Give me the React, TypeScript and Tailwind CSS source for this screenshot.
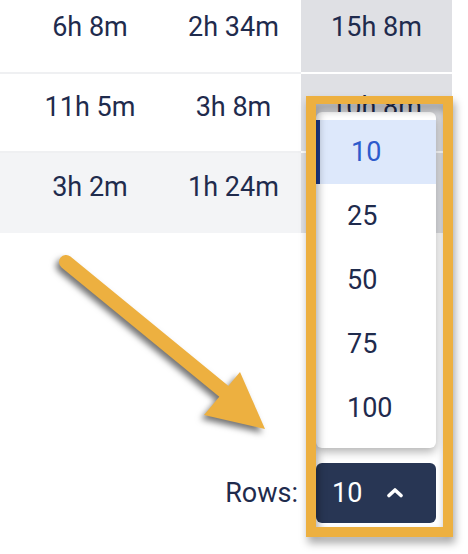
import React from "react";

const rows = [
  { a: "6h 8m", b: "2h 34m", c: "15h 8m", h: "h-[74px]", pt: "pt-[13px]", bg: "bg-white" },
  { a: "11h 5m", b: "3h 8m", c: "10h 8m", h: "h-[79px]", pt: "pt-[19px]", bg: "bg-white" },
  { a: "3h 2m", b: "1h 24m", c: "9h 40m", h: "h-[80px]", pt: "pt-[20px]", bg: "bg-[#f3f4f6]" },
];

const options = [10, 25, 50, 75, 100];

export default function App() {
  return (
    <div
      className="relative w-[468px] h-[554px] overflow-hidden bg-white text-[#1f2b4d]"
      style={{ fontFamily: "Roboto, 'Noto Sans', sans-serif" }}
    >
      {/* table */}
      <div className="w-[452px] text-[27px] leading-[28px]">
        {rows.map((r, i) => (
          <div key={i} className="grid grid-cols-[180px_121px_151px]">
            <div
              className={`${r.h} ${r.pt} ${r.bg} text-center ${i < 2 ? "border-b-2 border-[#eff0f2]" : ""}`}
            >
              {r.a}
            </div>
            <div
              className={`${r.h} ${r.pt} ${r.bg} pr-[14px] text-center ${i < 2 ? "border-b-2 border-[#eff0f2]" : ""}`}
            >
              {r.b}
            </div>
            <div
              className={`${r.h} ${r.pt} bg-[#dfe0e4] text-center ${i < 2 ? "border-b-2 border-white" : ""}`}
            >
              {r.c}
            </div>
          </div>
        ))}
      </div>

      {/* footer with rows select */}
      <div className="flex justify-end items-center gap-[18px] pr-[32px] pt-[230px]">
        <span className="text-[27px] leading-[28px]">Rows:</span>
        <div className="relative">
          <div className="absolute left-0 bottom-[75px] w-[120px] bg-white rounded-md py-2 shadow-[0_4px_10px_rgba(0,0,0,0.3)] z-10">
            {options.map((o) => (
              <div
                key={o}
                className={`h-16 flex items-center pl-[31px] text-[27px] ${
                  o === 10
                    ? "bg-[#dde8fb] text-[#2d5bcc] border-l-4 border-[#1e3a8a] pl-[27px]"
                    : ""
                }`}
              >
                {o}
              </div>
            ))}
          </div>
          <button className="w-[120px] h-[60px] rounded-md bg-[#283654] text-white flex items-center pl-[16px] gap-[24px] text-[27px]">
            <span>10</span>
            <svg width="18" height="11" viewBox="0 0 18 11" className="mt-[-2px]">
              <polyline
                points="3,8.5 9,3 15,8.5"
                fill="none"
                stroke="white"
                strokeWidth="3.6"
                strokeLinecap="round"
                strokeLinejoin="round"
              />
            </svg>
          </button>
          {/* highlight frame */}
          <div className="absolute left-[-10px] right-[-17px] top-[-367px] bottom-[-14px] border-[10px] border-t-8 border-[#edb040] z-20 pointer-events-none drop-shadow-[2px_6px_4px_rgba(0,0,0,0.35)]" />
        </div>
      </div>

      {/* annotation arrow */}
      <svg
        className="absolute left-0 top-0 pointer-events-none"
        width="468"
        height="554"
        style={{ filter: "drop-shadow(-3px 4px 3px rgba(0,0,0,0.55))" }}
      >
        <line
          x1="66"
          y1="262"
          x2="232"
          y2="398"
          stroke="#edb040"
          strokeWidth="14"
          strokeLinecap="round"
        />
        <polygon points="240,372 204,415 265,429" fill="#edb040" />
      </svg>
    </div>
  );
}
